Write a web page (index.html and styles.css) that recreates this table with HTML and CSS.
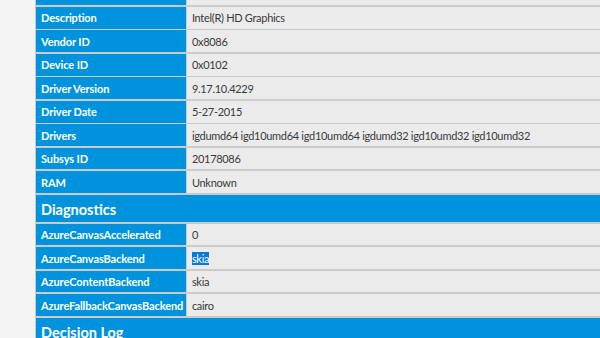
FILE: index.html
```html
<!DOCTYPE html>
<html>
<head>
<meta charset="utf-8">
<link rel="stylesheet" href="styles.css">
</head>
<body>
<div class="page">
  <div class="grid">
    <div class="label">Active</div><div class="value">Yes</div>
    <div class="label">Description</div><div class="value">Intel(R) HD Graphics</div>
    <div class="label">Vendor ID</div><div class="value">0x8086</div>
    <div class="label">Device ID</div><div class="value">0x0102</div>
    <div class="label">Driver Version</div><div class="value">9.17.10.4229</div>
    <div class="label">Driver Date</div><div class="value">5-27-2015</div>
    <div class="label">Drivers</div><div class="value">igdumd64 igd10umd64 igd10umd64 igdumd32 igd10umd32 igd10umd32</div>
    <div class="label">Subsys ID</div><div class="value">20178086</div>
    <div class="label">RAM</div><div class="value">Unknown</div>
    <div class="header">Diagnostics</div>
    <div class="label">AzureCanvasAccelerated</div><div class="value">0</div>
    <div class="label">AzureCanvasBackend</div><div class="value"><span class="sel">skia</span></div>
    <div class="label">AzureContentBackend</div><div class="value">skia</div>
    <div class="label">AzureFallbackCanvasBackend</div><div class="value">cairo</div>
    <div class="header">Decision Log</div>
    <div class="label">D2D</div><div class="value">disabled</div>
  </div>
</div>
</body>
</html>
```
FILE: styles.css
```css
html, body {
  margin: 0;
  padding: 0;
  background: #f4f4f4;
  overflow: hidden;
}
.page {
  padding-left: 35px;
  margin-top: -17.5px;
}
.grid {
  width: 600px;
  display: grid;
  grid-template-columns: 149.5px 1fr;
  gap: 1.9px;
  padding: 1px;
  background: #cbcbcb;
  font-family: Lato, "Open Sans", sans-serif;
  font-size: 11px;
}
.label {
  height: 21.6px;
  background: #0093dd;
  color: #ffffff;
  font-weight: 700;
  padding-left: 5px;
  display: flex;
  align-items: center;
  white-space: nowrap;
  letter-spacing: -0.1px;
}
.value {
  height: 21.6px;
  background: #ebebeb;
  color: #3a3a3a;
  padding-left: 4.5px;
  display: flex;
  align-items: center;
  white-space: nowrap;
  letter-spacing: -0.3px;
}
.header {
  grid-column: 1 / 3;
  height: 27px;
  background: #0093dd;
  color: #ffffff;
  font-weight: 700;
  font-size: 14.5px;
  padding-left: 5px;
  padding-top: 2px;
  box-sizing: border-box;
  display: flex;
  align-items: center;
}
.sel {
  background: #0a78d7;
  color: #ffffff;
}
```
